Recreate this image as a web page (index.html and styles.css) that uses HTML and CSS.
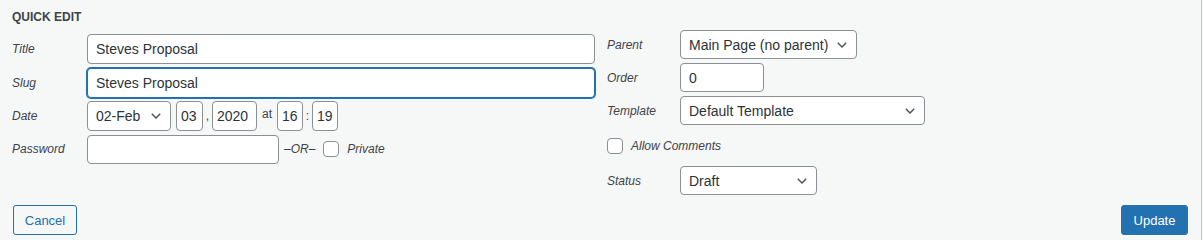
FILE: index.html
```html
<!DOCTYPE html>
<html lang="en">
<head>
  <meta charset="UTF-8">
  <title>Quick Edit</title>
  <link rel="stylesheet" href="styles.css">
</head>
<body>

  <div class="quick-edit">
    <div class="columns">
      <fieldset class="col-left">
        <div class="legend">Quick Edit</div>

        <label class="row">
          <span class="title">Title</span>
          <input type="text" class="text wide" value="Steves Proposal">
        </label>

        <label class="row">
          <span class="title">Slug</span>
          <input type="text" class="text wide focused" value="Steves Proposal">
        </label>

        <div class="row">
          <span class="title">Date</span>
          <div class="date-fields">
            <select class="month">
              <option>02-Feb</option>
            </select>
            <input type="text" class="text day" value="03">
            <span class="sep">,</span>
            <input type="text" class="text year" value="2020">
            <span class="sep at">at</span>
            <input type="text" class="text time" value="16">
            <span class="sep">:</span>
            <input type="text" class="text time" value="19">
          </div>
        </div>

        <div class="row">
          <span class="title">Password</span>
          <input type="text" class="text password">
          <em class="or">–OR–</em>
          <label class="check">
            <input type="checkbox">
            <span>Private</span>
          </label>
        </div>
      </fieldset>

      <fieldset class="col-right">
        <label class="row">
          <span class="title">Parent</span>
          <select class="parent">
            <option>Main Page (no parent)</option>
          </select>
        </label>

        <label class="row">
          <span class="title">Order</span>
          <input type="text" class="text order" value="0">
        </label>

        <label class="row">
          <span class="title">Template</span>
          <select class="template">
            <option>Default Template</option>
          </select>
        </label>

        <label class="row check-row">
          <label class="check">
            <input type="checkbox">
            <span>Allow Comments</span>
          </label>
        </label>

        <label class="row">
          <span class="title">Status</span>
          <select class="status">
            <option>Draft</option>
          </select>
        </label>
      </fieldset>
    </div>

    <div class="actions">
      <button class="button cancel">Cancel</button>
      <button class="button update">Update</button>
    </div>
  </div>

</body>
</html>
```

FILE: styles.css
```css
body {
  margin: 0;
  background-color: #f6f7f7;
  color: #3c434a;
  font-family: "Liberation Sans", Arial, sans-serif;
}

.quick-edit {
  width: 1202px;
  height: 240px;
  box-sizing: border-box;
  border-right: 1px solid #c3c4c7;
  padding: 8px 13px 0 12px;
}

.columns {
  display: grid;
  grid-template-columns: 589px 1fr;
}

fieldset {
  margin: 0;
  padding: 0;
  border: none;
  display: flex;
  flex-direction: column;
}

.col-left {
  padding-right: 6px;
  gap: 3.5px;
}

.col-right {
  padding: 22px 0 0 6px;
  gap: 4px;
}

.legend {
  font-size: 12px;
  font-weight: bold;
  text-transform: uppercase;
  line-height: 18px;
  margin-bottom: 4.5px;
}

.row {
  display: flex;
  align-items: center;
}

.title {
  font-size: 12px;
  font-style: italic;
  width: 75px;
  flex-shrink: 0;
}

.col-right .title {
  width: 73px;
}

input.text,
select {
  box-sizing: border-box;
  height: 30px;
  margin: 0;
  border: 1px solid #8c8f94;
  border-radius: 4px;
  background-color: #fff;
  color: #2c3338;
  font-family: inherit;
  font-size: 14px;
  padding: 0 8px;
  outline: none;
}

.col-right input.text,
.col-right select {
  height: 29px;
}

input.wide {
  flex: 1;
}

input.focused {
  border-color: #2271b1;
  box-shadow: 0 0 0 1px #2271b1;
}

select {
  appearance: none;
  -webkit-appearance: none;
  padding-right: 26px;
  background-image: url("data:image/svg+xml;utf8,<svg xmlns='http://www.w3.org/2000/svg' width='10' height='6' viewBox='0 0 10 6'><polyline points='0.8,0.8 5,5 9.2,0.8' fill='none' stroke='%2350575e' stroke-width='1.5'/></svg>");
  background-repeat: no-repeat;
  background-position: right 9px center;
}

.date-fields {
  display: flex;
  align-items: center;
}

.month {
  width: 84px;
}

input.day {
  width: 27px;
  padding: 0 4px;
  margin-left: 5px;
}

input.year {
  width: 45px;
  padding: 0 4px;
}

input.time {
  width: 26px;
  padding: 0 4px;
}

.sep {
  font-size: 12px;
  width: 9px;
  text-align: center;
}

.sep.at {
  width: 20px;
  margin-top: -4px;
}

input.password {
  width: 192px;
  height: 29px;
}

.or {
  font-size: 12px;
  margin: 0 8px 0 5px;
}

.check {
  display: flex;
  align-items: center;
  gap: 8px;
  font-size: 12px;
  font-style: italic;
}

.check input {
  appearance: none;
  -webkit-appearance: none;
  width: 16px;
  height: 16px;
  margin: 0;
  border: 1px solid #8c8f94;
  border-radius: 4px;
  background-color: #fff;
}

.check-row {
  height: 33px;
}

.parent {
  width: 177px;
}

input.order {
  width: 84px;
}

.template {
  width: 245px;
}

.status {
  width: 137px;
}

.actions {
  display: flex;
  justify-content: space-between;
  margin-top: 10px;
  padding-left: 1px;
}

.button {
  height: 30px;
  border: 1px solid #2271b1;
  border-radius: 3px;
  font-family: inherit;
  font-size: 13px;
  padding: 0 10px;
}

.cancel {
  background-color: #f6f7f7;
  color: #2271b1;
  width: 64px;
}

.update {
  background-color: #2271b1;
  color: #fff;
  width: 67px;
}
```
